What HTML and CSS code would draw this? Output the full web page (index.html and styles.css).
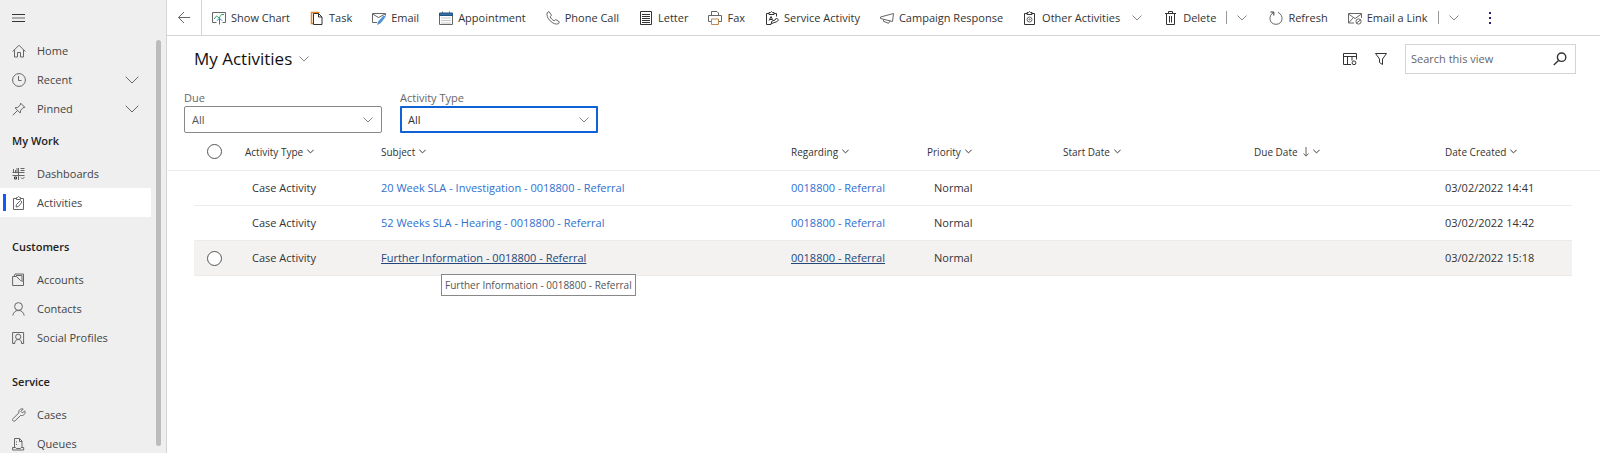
FILE: index.html
```
<!DOCTYPE html>
<html lang="en">
<head>
<meta charset="utf-8">
<title>My Activities</title>
<link rel="stylesheet" href="styles.css">
</head>
<body>
<svg class="defs" aria-hidden="true">
  <symbol id="chev" viewBox="0 0 10 6"><path d="M.5 .5 5 5 9.5 .5"/></symbol>
</svg>
<div class="app">
  <nav class="side">
    <button class="burger" aria-label="Menu"><svg class="ic" viewBox="0 0 14 14"><path class="dark" d="M0 3.5h13M0 10.5h13"/><path d="M0 7h13"/></svg></button>
    <a class="item" href="#"><svg class="ic" viewBox="0 0 14 14"><path d="M.6 7.6 7 1.2l6.4 6.4M2.500 6v7h3V8.500h3V13h3V6"/></svg><span>Home</span></a>
    <a class="item" href="#"><svg class="ic" viewBox="0 0 14 14"><circle cx="7" cy="7" r="6.4"/><path d="M6.500 3v4.500h3"/></svg><span>Recent</span><svg class="fold" viewBox="0 0 14 8"><path d="M.7 .7 7 7 13.300 .7"/></svg></a>
    <a class="item" href="#"><svg class="ic" viewBox="0 0 14 14"><path d="M8.700 1.200 12.800 5.300 11 5.800 8.700 8.200 8.200 11 3 5.900 5.900 5.400 8.200 3ZM5.500 8.500.8 13.200"/></svg><span>Pinned</span><svg class="fold" viewBox="0 0 14 8"><path d="M.7 .7 7 7 13.300 .7"/></svg></a>
    <h2>My Work</h2>
    <a class="item" href="#"><svg class="ic" viewBox="0 0 14 14"><path d="M.5 5.500h12M.5 8.500h12M6.500 1v12M1.500 2v3M3.500 3v2M5 1v4M8.500 1.500h4M8.500 3.500h4M9 10.500l1.500 1.500 2-2"/><path class="dark" d="M2.500 10h2v2h-2z"/></svg><span>Dashboards</span></a>
    <a class="item on" href="#" aria-current="page"><svg class="ic" viewBox="0 0 14 14"><path d="M4.500 2.500h-3v11h10v-11h-3M4.500 3.500v-2h1l1-1 1 1h1v2zM4 11l.5-2.500L8.500 4.500 10 6 6.500 10.500z"/></svg><span>Activities</span></a>
    <h2 class="later">Customers</h2>
    <a class="item" href="#"><svg class="ic" viewBox="0 0 14 14"><path d="M.6 3.500V12.500H11.500V8.500L8.500 7.500 4.500 3.500ZM2 3.500 3 1H11.500V8.500M4 2.500h6v5"/></svg><span>Accounts</span></a>
    <a class="item" href="#"><svg class="ic" viewBox="0 0 14 14"><circle cx="6.500" cy="4.500" r="3.900"/><path d="M.8 13.500C1.300 10.500 3.500 8.400 6.500 8.400s5.200 2.100 5.700 5.100"/></svg><span>Contacts</span></a>
    <a class="item" href="#"><svg class="ic" viewBox="0 0 14 14"><path d="M3 12.500H.6v-11h11v11H9.500"/><circle cx="6.200" cy="5.800" r="2.600"/><path d="M2.500 12.800C2.700 10 4.200 8.500 6.200 8.500s3.500 1.500 3.700 4.300"/></svg><span>Social Profiles</span></a>
    <h2 class="later">Service</h2>
    <a class="item" href="#"><svg class="ic" viewBox="0 0 14 14"><path d="M12.700 2.800 10.500 5 8.900 3.400 11.200 1C8.500.2 6.300 2.400 6.800 4.900L1 10.700c-.6.600-.6 1.500 0 2.100s1.500.5 2.100 0l5.500-5.400c3 .8 5.400-1.900 4.100-4.600z"/></svg><span>Cases</span></a>
    <a class="item" href="#"><svg class="ic" viewBox="0 0 14 14"><path d="M2.500 10.500V1.500h5l2.500 2.500v6.500M7.500 1.500v3H10M.6 10.500h3l.8 1h4l.8-1h2.500v2.500H.6zM4.500 4.500v1M4.500 7v1"/></svg><span>Queues</span></a>
    <div class="thumb"></div>
  </nav>
  <div class="main">
    <header class="bar">
      <button class="back" aria-label="Back"><svg class="ic" viewBox="0 0 14 14"><path d="M13 6.500H1.500M7 1 1.500 6.500 7 12"/></svg></button>
      <div class="cmds">
        <button class="cmd"><svg class="ic" viewBox="0 0 14 14"><path d="M4.500 11.500H.5v-10h13v10h-3"/><path class="green" d="M2 8l2.500-3 2.500 2 2.500-3.500L12 3.500"/><path class="blue" d="M7.500 13.500v-6M5 9.700l2.500-2.500L10 9.700"/></svg>Show Chart</button>
        <button class="cmd"><svg class="ic" viewBox="0 0 14 14"><path class="orange" d="M3 12.500H1.500v-11h8"/><path class="dark" d="M3.500 2.500h5L12 6v7.500H3.500zM8.500 2.500V6H12"/></svg>Task</button>
        <button class="cmd"><svg class="ic" viewBox="0 0 14 14"><path d="M5 11.500H.5v-9h13v2M.5 3l6 3.500 6.500-3.500"/><path class="fill" d="M13.500 5.500 8.500 12 5.500 13.500 6.500 10.500 11.500 5z"/></svg>Email</button>
        <button class="cmd"><svg class="ic" viewBox="0 0 14 14"><path d="M.5 2.500h13v11H.5z"/><path class="navy" d="M.5 2h13v2.500H.5z"/><path class="dots" d="M2.500 7h9.500M2.500 9.500h9.500M2.500 12h9.500"/><path d="M3.500 .5v2M10.500 .5v2"/></svg>Appointment</button>
        <button class="cmd"><svg class="ic" viewBox="0 0 14 14"><path d="M1.300 1.500 3 .6 5.500 4.200 4.200 5.800c.7 1.700 2.200 3.200 4 4l1.600-1.300 3.600 2.400-.9 1.800C7.500 15-1 6.500 1.300 1.500z"/></svg>Phone Call</button>
        <button class="cmd"><svg class="ic" viewBox="0 0 14 14"><path class="dark" d="M1.500 .5h11v13h-11zM3 3.500h8M3 5.500h8M3 7.500h8M3 9.500h8M3 11.500h8"/></svg>Letter</button>
        <button class="cmd"><svg class="ic" viewBox="0 0 14 14"><path d="M3.500 10.500h-3v-6h13v6h-3M3.500 4.500v-4h5.500l1.500 1.500v2.500"/><path class="tan" d="M3.500 8h7v5.500h-7z"/></svg>Fax</button>
        <button class="cmd"><svg class="ic" viewBox="0 0 14 14"><path class="dark" d="M4 2.500H1.500v11H6M9 2.500h2.500v3M4 3.500v-2h1.500l1-1 1 1H9v2zM4 9.500 6 5.500l1.500 3M4.500 8.500h3M6 13l1-3 3-1 1.500-2 2 2-2 2-2.500.5z"/></svg>Service Activity</button>
        <button class="cmd"><svg class="ic" viewBox="0 0 14 14"><path d="M.5 6 13.500 2.500 12.500 10.500 .5 7.500zM3.500 8.500v1.800l5 2 1.500-2.400"/></svg>Campaign Response</button>
        <button class="cmd"><svg class="ic" viewBox="0 0 14 14"><path class="dark" d="M4.500 2.500h-3v11h10v-11h-3M4 3.500v-2h1.500l1-1 1 1H9v2z"/><circle cx="6.500" cy="8.500" r="2.500"/><circle cx="6.500" cy="8.500" r=".6"/></svg>Other Activities<svg class="chev gap"><use href="#chev"/></svg></button>
        <div class="split"><button class="cmd"><svg class="ic" viewBox="0 0 14 14"><path class="dark" d="M1 2.500h11M2.500 2.500v11h8v-11M4.500 2.500v-2h4v2M5.500 5v6.500M7.500 5v6.500"/></svg>Delete</button><button class="more" aria-label="Delete options"><svg class="chev"><use href="#chev"/></svg></button></div>
        <button class="cmd"><svg class="ic" viewBox="0 0 14 14"><path d="M4.500 1.500C-1 4.500 0 13.300 7 13.300s8.300-9 2-12"/><path class="dark" d="M1.500 1h3.300v3.500"/></svg>Refresh</button>
        <div class="split"><button class="cmd"><svg class="ic" viewBox="0 0 14 14"><path d="M6 12H.5V2.500h13V7M.5 3l6.500 4.500L13.500 3M.5 12l4.500-5"/><circle cx="10.500" cy="10.500" r="2.600"/><path d="M8 12.500l5-4"/></svg>Email a Link</button><button class="more" aria-label="Email a Link options"><svg class="chev"><use href="#chev"/></svg></button></div>
        <button class="dotsbtn" aria-label="More commands"><svg viewBox="0 0 2 12"><path d="M0 0h2v2H0zM0 5h2v2H0zM0 10h2v2H0z"/></svg></button>
      </div>
    </header>
    <div class="head">
      <h1><button class="view">My Activities<svg class="chev"><use href="#chev"/></svg></button></h1>
      <div class="tools">
        <button aria-label="Edit columns"><svg class="ic" viewBox="0 0 14 14"><path class="dark" d="M8 12.500H.5v-11h13v6M.5 4.500h13M4.500 4.500v8M9 4.500v4"/><circle class="dark" cx="11" cy="10.800" r="1.900"/></svg></button>
        <button aria-label="Filter"><svg class="ic" viewBox="0 0 14 14"><path class="dark" d="M1.500 1.500h11L8.500 7v5.500l-3-2V7z"/></svg></button>
        <div class="search"><input type="search" aria-label="Search this view" placeholder="Search this view"><button aria-label="Search"><svg class="ic" viewBox="0 0 14 14"><circle class="dark bold" cx="8.600" cy="5.200" r="4.200"/><path class="dark bold" d="M5.500 8.500.8 13"/></svg></button></div>
      </div>
    </div>
    <div class="filters">
      <div class="field"><label for="due">Due</label><div class="pick"><select id="due"><option>All</option></select><svg class="chev"><use href="#chev"/></svg></div></div>
      <div class="field focus"><label for="type">Activity Type</label><div class="pick"><select id="type"><option>All</option></select><svg class="chev"><use href="#chev"/></svg></div></div>
    </div>
    <div class="grid">
      <table>
        <colgroup><col class="c-check"><col class="c-std"><col><col class="c-std"><col class="c-std"><col class="c-date"><col class="c-date"><col class="c-last"></colgroup>
        <thead><tr>
          <th><input type="checkbox" aria-label="Select all rows"></th>
          <th>Activity Type<svg class="sort"><use href="#chev"/></svg></th>
          <th>Subject<svg class="sort"><use href="#chev"/></svg></th>
          <th>Regarding<svg class="sort"><use href="#chev"/></svg></th>
          <th>Priority<svg class="sort"><use href="#chev"/></svg></th>
          <th>Start Date<svg class="sort"><use href="#chev"/></svg></th>
          <th>Due Date<svg class="down" viewBox="0 0 6 10"><path d="M3 0v9M.5 6.500 3 9.200 5.500 6.500"/></svg><svg class="sort"><use href="#chev"/></svg></th>
          <th>Date Created<svg class="sort"><use href="#chev"/></svg></th>
        </tr></thead>
        <tbody>
          <tr><td><input type="checkbox" aria-label="Select row"></td><td class="opt">Case Activity</td><td><a href="#">20 Week SLA - Investigation - 0018800 - Referral</a></td><td><a href="#">0018800 - Referral</a></td><td class="opt">Normal</td><td></td><td></td><td>03/02/2022 14:41</td></tr>
          <tr><td><input type="checkbox" aria-label="Select row"></td><td class="opt">Case Activity</td><td><a href="#">52 Weeks SLA - Hearing - 0018800 - Referral</a></td><td><a href="#">0018800 - Referral</a></td><td class="opt">Normal</td><td></td><td></td><td>03/02/2022 14:42</td></tr>
          <tr class="hover"><td><input type="checkbox" aria-label="Select row"></td><td class="opt">Case Activity</td><td class="tipcell"><a href="#" aria-describedby="tip">Further Information - 0018800 - Referral</a><div class="tip" id="tip" role="tooltip">Further Information - 0018800 - Referral</div></td><td><a href="#">0018800 - Referral</a></td><td class="opt">Normal</td><td></td><td></td><td>03/02/2022 15:18</td></tr>
        </tbody>
      </table>
    </div>
  </div>
</div>
</body>
</html>
```
FILE: styles.css
```
* { box-sizing: border-box; }
body {
  margin: 0;
  background: #fff;
  color: #333;
  font: 11px/16px "Open Sans", "Noto Sans", sans-serif;
}
button, input, select { font: inherit; color: inherit; }
button { border: 0; padding: 0; background: none; display: flex; align-items: center; white-space: nowrap; }
svg { fill: none; stroke: #666; flex: none; }
.defs { position: absolute; width: 0; height: 0; }
.ic { width: 14px; height: 14px; }
.chev { width: 10px; height: 6px; stroke: #888; }
.dark { stroke: #333; }
.bold { stroke-width: 1.4; }
.green { stroke: #2fa866; }
.blue { stroke: #2b78c0; }
.orange { stroke: #e0872a; stroke-width: 1.5; }
.fill { fill: #4a94d8; stroke: #3a7fc4; stroke-width: .5; }
.navy { fill: #2f6fae; stroke: #24527f; }
.dots { stroke-dasharray: 1 1; stroke: #888; }
.tan { stroke: #b98a52; }

.app { display: flex; height: 100vh; overflow: hidden; }

/* Site map */
.side { position: relative; width: 167px; flex: none; overflow: hidden; background: #efefef; border-right: 1px solid #d4d4d4; }
.burger { height: 36px; padding-left: 12px; }
.item { display: flex; align-items: center; height: 29px; width: 151px; padding: 0 12px; color: #444; text-decoration: none; }
.item span { flex: 1; padding-left: 11px; }
.fold { width: 14px; height: 8px; }
.on { background: #fff; border-left: 3px solid #fff; padding-left: 9px; position: relative; }
.on::before { content: ""; position: absolute; left: 0; top: 6px; width: 3px; height: 17px; background: #0f5cf5; }
.side h2 { margin: 0; padding-left: 12px; font-size: 11px; font-weight: 600; line-height: 36px; color: #222; }
.side .later { margin-top: 12px; }
.thumb { position: absolute; right: 5px; top: 40px; bottom: 7px; width: 5px; border-radius: 3px; background: #bcbcbc; }

/* Command bar */
.main { flex: 1; min-width: 0; }
.bar { display: flex; height: 36px; border-bottom: 1px solid #d4d4d4; }
.back { width: 35px; padding-left: 10px; border-right: 1px solid #d4d4d4; }
.cmds { display: flex; align-items: center; gap: 20px; padding-left: 10px; }
.cmd { gap: 5px; }
.gap { margin: 0 2px 0 7px; }
.split { display: flex; align-items: center; gap: 10px; }
.more { height: 13px; padding: 0 2px 0 10px; border-left: 1px solid #999; }
.dotsbtn { padding-left: 8px; }
.dotsbtn svg { width: 2px; height: 12px; fill: #2a1a7a; stroke: none; }

/* View heading */
.head { display: flex; align-items: center; justify-content: space-between; padding: 8px 24px 0 27px; }
h1 { margin: 0; font-size: 17px; line-height: 30px; font-weight: 500; color: #111; }
.view { gap: 7px; }
.tools { display: flex; align-items: center; gap: 17px; }
.search { display: flex; align-items: center; width: 171px; height: 30px; padding: 0 8px 0 5px; border: 1px solid #d4d4d4; }
.search input { flex: 1; min-width: 0; border: 0; padding: 0; outline: 0; background: none; appearance: none; }
.search input::placeholder { color: #666; opacity: 1; }

/* Quick filters */
.filters { display: flex; gap: 18px; padding: 16px 17px 0; }
.field { width: 198px; }
.field label { display: block; color: #666; }
.pick { display: grid; align-items: center; height: 27px; }
.pick select { grid-area: 1 / 1; width: 100%; height: 27px; padding: 0 7px; border: 1px solid #888; border-radius: 2px; background: none; appearance: none; color: #555; }
.pick .chev { grid-area: 1 / 1; justify-self: end; margin-right: 9px; }
.focus select { padding: 0 6px; border: 2px solid #0f62d6; border-radius: 1px; color: #333; }

/* Records */
.grid { padding: 0 28px 0 27px; }
table { width: 100%; table-layout: fixed; border-collapse: separate; border-spacing: 0; }
.c-check { width: 51px; }
.c-std { width: 136px; }
.c-date { width: 191px; }
.c-last { width: 127px; }
th, td { padding: 0; text-align: left; white-space: nowrap; border-bottom: 1px solid #edebe9; }
th { position: relative; height: 38px; font-size: 10px; font-weight: 500; }
th:first-child::after, th:last-child::after { content: ""; position: absolute; bottom: -1px; width: 28px; height: 1px; background: #edebe9; }
th:first-child::after { right: 100%; }
th:last-child::after { left: 100%; }
td { height: 35px; }
.opt { padding-left: 7px; }
.sort { width: 7px; height: 5px; margin-left: 4px; vertical-align: 2px; stroke: #333; stroke-width: 1.4; }
.down { width: 6px; height: 10px; margin-left: 5px; vertical-align: -1px; }
td a { color: #2f6fd0; text-decoration: none; }
input[type="checkbox"] { appearance: none; display: block; width: 15px; height: 15px; margin: 0 0 0 13px; border: 1px solid #555; border-radius: 50%; }
td input[type="checkbox"] { opacity: 0; }
.hover td { background: #f3f2f1; }
.hover input[type="checkbox"] { opacity: 1; background: #fff; }
.hover a { color: #23477a; text-decoration: underline; }
.tipcell { position: relative; }
.tip { position: absolute; left: 60px; top: 33px; padding: 2px 3px; border: 1px solid #888; background: #fff; color: #555; font-size: 10px; }
```
